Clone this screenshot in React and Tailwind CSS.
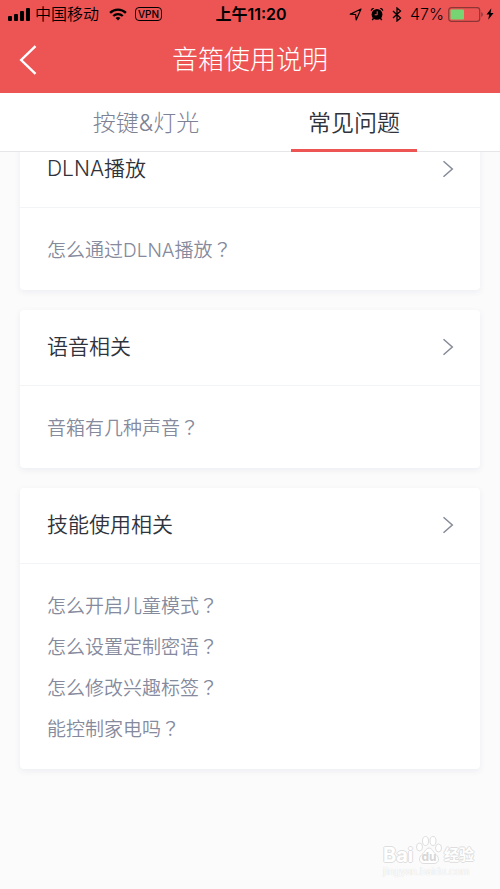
import React from "react";

const sections = [
  { title: "DLNA播放", questions: ["怎么通过DLNA播放"] },
  { title: "语音相关", questions: ["音箱有几种声音"] },
  {
    title: "技能使用相关",
    questions: ["怎么开启儿童模式", "怎么设置定制密语", "怎么修改兴趣标签", "能控制家电吗"],
  },
];

function StatusBar() {
  return (
    <div className="grid h-7 grid-cols-[1fr_auto_1fr] items-center pr-1.5 pl-2 text-[16px] leading-7 text-black">
      <div className="flex items-center">
        <svg width="23" height="14" viewBox="0 0 23 14" aria-hidden="true">
          <rect x="0" y="9" width="4" height="5" rx="1" />
          <rect x="6" y="7" width="4" height="7" rx="1" />
          <rect x="12" y="4" width="4" height="10" rx="1" />
          <rect x="18" y="1" width="4" height="13" rx="1" />
        </svg>
        <span className="ml-1 font-[350]">中国移动</span>
        <svg className="ml-2.5" width="18" height="13" viewBox="0 0 20 14" fill="none" stroke="#000" aria-hidden="true">
          <path d="M1.200 5.200C6 .4 14 .4 18.800 5.200" strokeWidth="2.600" />
          <path d="M4.700 8.700c3-2.900 7.600-2.900 10.600 0" strokeWidth="2.500" />
          <path d="M10 13.800 7.300 11c1.500-1.500 3.900-1.500 5.400 0z" fill="#000" stroke="none" />
        </svg>
        <span className="ml-2 flex h-[14px] w-[27px] items-center justify-center rounded-[4px] border border-black text-[10px] leading-none font-medium">
          VPN
        </span>
      </div>
      <span className="font-semibold">上午11:20</span>
      <div className="flex items-center justify-end">
        <svg width="13" height="13" viewBox="0 0 13 13" fill="none" stroke="#000" strokeWidth="1.200" strokeLinejoin="round" aria-hidden="true">
          <path d="M12 1 1.200 6.200l5.400.3.600 5.500z" />
        </svg>
        <svg className="ml-2" width="14" height="14" viewBox="0 0 14 14" aria-hidden="true">
          <circle cx="7" cy="7.400" r="5.400" />
          <path d="M.9 4.300C.2 2.400 2.200.5 4.200 1.300zM13.100 4.300C13.800 2.400 11.800.5 9.800 1.300z" />
          <path d="m3.600 11.200-1.300 1.900m8.100-1.900 1.300 1.900" stroke="#000" strokeWidth="1.500" />
          <path d="M7.200 4.300v3.500H4.700" fill="none" stroke="#ed5555" strokeWidth="1" />
        </svg>
        <svg className="ml-2" width="10" height="15" viewBox="0 0 10 15" fill="none" stroke="#000" strokeWidth="1.300" aria-hidden="true">
          <path d="m1 4 7.500 7L5 14V1l3.500 3L1 11" />
        </svg>
        <span className="ml-2 font-[350]">47%</span>
        <svg className="ml-1" width="36" height="15" viewBox="0 0 36 15" aria-hidden="true">
          <rect x=".7" y=".7" width="31" height="13.600" rx="2.600" fill="none" stroke="#8c3636" strokeWidth="1.200" />
          <rect x="2.500" y="2.500" width="13.500" height="10" rx="1" fill="#76d572" />
          <path d="M33.300 5v5c2-.8 2-4.200 0-5z" fill="#8c3636" />
        </svg>
        <svg className="ml-0.5" width="8" height="14" viewBox="0 0 9 14" aria-hidden="true">
          <path d="M6 .5.600 7.700h3L2.500 13.500l6-7.600H5.200z" />
        </svg>
      </div>
    </div>
  );
}

function Card({ title, questions }) {
  return (
    <section className="rounded-[4px] bg-white shadow-[0_2px_6px_rgba(60,80,150,0.08)]">
      <button type="button" className="flex h-[76px] w-full items-center justify-between border-b border-[#f3f4f6] pr-[26px] pb-0.5 pl-[27px] text-left">
        <h2 className="text-[21px] font-[350] text-[#30333b]">{title}</h2>
        <svg width="12" height="18" viewBox="0 0 12 18" fill="none" stroke="#858a99" strokeWidth="1.500" aria-hidden="true">
          <path d="m1.500 1.200 8.800 7.800-8.800 7.800" />
        </svg>
      </button>
      <ul className="px-[27px] pt-[22px] pb-[19px]">
        {questions.map((q) => (
          <li key={q}>
            <a href="#" className="block text-[19px] leading-[41px] font-[350] text-[#858a9c]">
              {q}
              <span className="font-['Noto_Sans_CJK_TC',sans-serif] leading-none" lang="zh-TW">？</span>
            </a>
          </li>
        ))}
      </ul>
    </section>
  );
}

function Watermark() {
  return (
    <div className="absolute right-[26px] bottom-3 w-[91px] text-white" aria-hidden="true">
      <div className="flex items-end justify-between [text-shadow:1px_0_#dedede,-1px_0_#dedede,0_1px_#dedede,0_-1px_#dedede]">
        <span className="text-[20px] leading-5 font-bold">Bai</span>
        <svg className="[text-shadow:none]" width="28" height="30" viewBox="0 0 28 30" fill="#fff" stroke="#dedede" strokeWidth="1">
          <ellipse cx="4.500" cy="12" rx="3" ry="4" />
          <ellipse cx="10.500" cy="6" rx="3" ry="4.500" />
          <ellipse cx="18" cy="6" rx="3" ry="4.500" />
          <ellipse cx="23.500" cy="13" rx="3" ry="4" />
          <path d="M14 13c-3 0-4 4-7 6.500-4 3.500-3 9 2 9h10c5 0 6-5.500 2-9C18 17 17 13 14 13z" />
          <text x="14" y="26" textAnchor="middle" fontSize="12" fontWeight="700" fill="#d6d6d6" stroke="none">du</text>
        </svg>
        <span className="text-[15px] leading-5 font-bold">经验</span>
      </div>
      <div className="text-[10px] leading-3 [text-shadow:0_0_1px_#ccc]">jingyan.baidu.com</div>
    </div>
  );
}

export default function App() {
  return (
    <div className="relative flex min-h-screen flex-col overflow-hidden bg-[#fbfbfb] font-['Inter','Noto_Sans_CJK_SC',sans-serif]">
      <header className="relative z-10">
        <div className="bg-[#ed5555]">
          <StatusBar />
          <div className="grid h-[65px] grid-cols-[56px_1fr_56px] items-center pb-0.5 text-white">
            <button type="button" aria-label="返回" className="pl-[19px]">
              <svg width="18" height="30" viewBox="0 0 18 30" fill="none" stroke="#fff" strokeWidth="2.400">
                <path d="M16.500 1.200 2.200 15l14.300 13.800" />
              </svg>
            </button>
            <h1 className="text-center text-[26px] leading-[62px] font-light">音箱使用说明</h1>
          </div>
        </div>
        <nav className="flex h-[59px] border-b border-[#e6e6e8] bg-white px-[42px] text-[23px]">
          <button type="button" className="flex-1 pt-[3px] font-light text-[#7d8294]">按键&amp;灯光</button>
          <button type="button" className="flex-1 font-[350] text-[#30333b]">
            <span className="mx-[41px] -mb-px flex h-[59px] items-center justify-center border-b-3 border-[#ed5555] pt-1">常见问题</span>
          </button>
        </nav>
      </header>
      <main className="-mt-5 flex flex-col gap-5 px-5">
        {sections.map((s) => (
          <Card key={s.title} {...s} />
        ))}
      </main>
      <Watermark />
    </div>
  );
}
